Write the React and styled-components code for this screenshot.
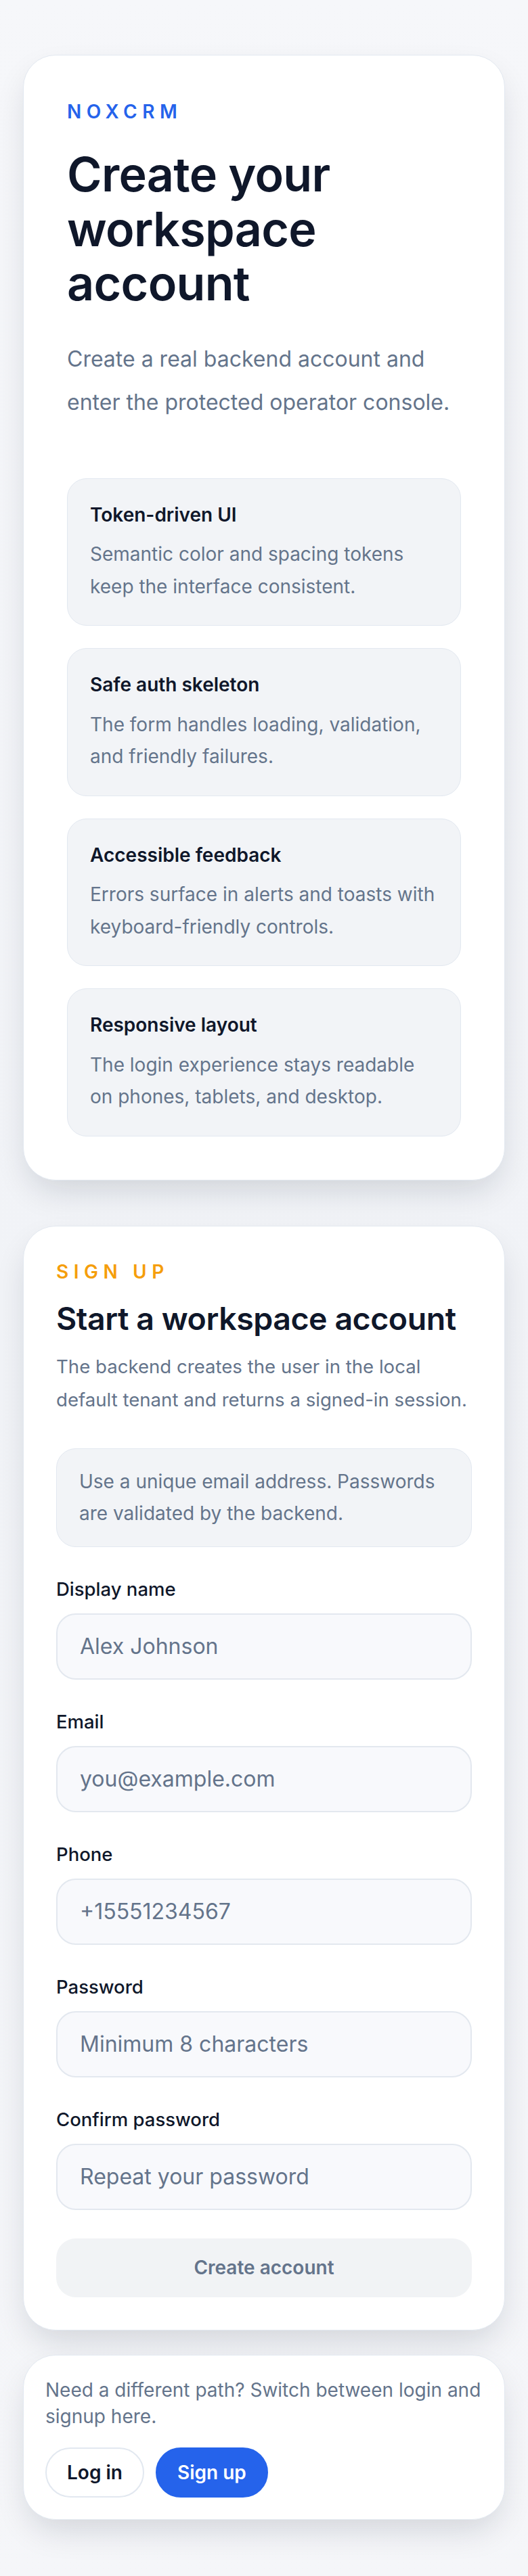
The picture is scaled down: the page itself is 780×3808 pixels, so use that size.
import React from "react";
import styled, { createGlobalStyle } from "styled-components";

const GlobalStyle = createGlobalStyle`
    * {
        box-sizing: border-box;
    }

    html, body {
        margin: 0;
        padding: 0;
        background: #f4f6f9;
    }

    body {
        font-family: Inter, "Noto Sans", "Liberation Sans", sans-serif;
        color: #0f172a;
        -webkit-font-smoothing: antialiased;
    }
`;

const Page = styled.main`
    min-height: 100vh;
    padding: 81px 34px 81px;
    display: flex;
    flex-direction: column;
    gap: 67px;
    background: linear-gradient(180deg, #f6f7fa 0%, #f1f3f7 50%, #f5f6f9 100%);
`;

const Card = styled.section`
    background: #ffffff;
    border: 1px solid #e2e8f0;
    border-radius: 48px;
    box-shadow: 0 22px 50px -10px rgba(15, 23, 42, 0.16);
    padding: ${(p) => p.$pad || "48px"};
`;

const AuthColumn = styled.div`
    display: flex;
    flex-direction: column;
    gap: 36px;
`;

const Eyebrow = styled.p`
    margin: 0;
    font-size: 28px;
    line-height: 39px;
    font-weight: 600;
    letter-spacing: 0.27em;
    text-transform: uppercase;
    color: ${(p) => p.$color};
`;

const HeroTitle = styled.h1`
    margin: 33px 0 0;
    font-size: 70px;
    line-height: 80.5px;
    font-weight: 600;
    letter-spacing: -0.01em;
    color: #0f172a;
`;

const HeroText = styled.p`
    margin: 39px 0 0;
    font-size: 32px;
    line-height: 64px;
    color: #64748b;
`;

const FeatureList = styled.div`
    margin-top: 80px;
    display: flex;
    flex-direction: column;
    gap: 33px;
`;

const Feature = styled.div`
    background: #f2f4f7;
    border: 1px solid #e2e8f0;
    border-radius: 29px;
    padding: 33px 33px;
`;

const FeatureTitle = styled.h3`
    margin: 0;
    font-size: 28px;
    line-height: 41px;
    font-weight: 600;
    color: #0f172a;
`;

const FeatureText = styled.p`
    margin: 14.5px 0 0;
    font-size: 28px;
    line-height: 47.5px;
    color: #64748b;
`;

const FormTitle = styled.h2`
    margin: 21px 0 0;
    font-size: 46.5px;
    line-height: 56px;
    font-weight: 600;
    letter-spacing: -0.01em;
    color: #0f172a;
`;

const Lead = styled.p`
    margin: 19.5px 0 0;
    font-size: 27.6px;
    line-height: 48.6px;
    color: #64748b;
`;

const Notice = styled.div`
    margin-top: 48px;
    background: #f2f4f7;
    border: 1px solid #e2e8f0;
    border-radius: 29px;
    padding: 25px 33px;
    font-size: 28px;
    line-height: 47px;
    color: #64748b;
`;

const Form = styled.form`
    margin-top: 43.5px;
    display: flex;
    flex-direction: column;
    gap: 44px;
`;

const Field = styled.label`
    display: flex;
    flex-direction: column;
    gap: 18px;
`;

const FieldLabel = styled.span`
    font-size: 27.5px;
    line-height: 36px;
    font-weight: 500;
    color: #0f172a;
`;

const Input = styled.input`
    height: 98px;
    width: 100%;
    border: 2px solid #e3e8ef;
    border-radius: 29px;
    background: #f8f9fc;
    padding: 0 33px;
    font-family: inherit;
    font-size: 32px;
    color: #0f172a;
    outline: none;

    &::placeholder {
        color: #64748b;
        opacity: 1;
    }
`;

const SubmitButton = styled.button`
    margin-top: -2px;
    height: 87.5px;
    border: none;
    border-radius: 29px;
    background: #f1f3f5;
    color: #64748b;
    font-family: inherit;
    font-size: 28px;
    font-weight: 600;
`;

const SwitchText = styled.p`
    margin: 0;
    font-size: 28px;
    line-height: 39.3px;
    color: #64748b;
`;

const ButtonRow = styled.div`
    margin-top: 25px;
    display: flex;
    gap: 17px;
`;

const PillButton = styled.button`
    height: 74.5px;
    padding: 0 30px;
    border-radius: 999px;
    border: 2px solid ${(p) => (p.$primary ? "#2563eb" : "#e2e8f0")};
    background: ${(p) => (p.$primary ? "#2563eb" : "#ffffff")};
    color: ${(p) => (p.$primary ? "#ffffff" : "#0f172a")};
    font-family: inherit;
    font-size: 28px;
    font-weight: 600;
`;

const features = [
    {
        title: "Token-driven UI",
        text: "Semantic color and spacing tokens keep the interface consistent.",
    },
    {
        title: "Safe auth skeleton",
        text: "The form handles loading, validation, and friendly failures.",
    },
    {
        title: "Accessible feedback",
        text: "Errors surface in alerts and toasts with keyboard-friendly controls.",
    },
    {
        title: "Responsive layout",
        text: "The login experience stays readable on phones, tablets, and desktop.",
    },
];

const fields = [
    { label: "Display name", type: "text", placeholder: "Alex Johnson" },
    { label: "Email", type: "email", placeholder: "you@example.com" },
    { label: "Phone", type: "tel", placeholder: "+15551234567" },
    { label: "Password", type: "password", placeholder: "Minimum 8 characters" },
    { label: "Confirm password", type: "password", placeholder: "Repeat your password" },
];

export default function App() {
    return (
        <>
            <GlobalStyle />
            <Page>
                <Card $pad="64px">
                    <Eyebrow $color="#2563eb">NoxCRM</Eyebrow>
                    <HeroTitle>Create your workspace account</HeroTitle>
                    <HeroText>
                        Create a real backend account and enter the protected operator console.
                    </HeroText>
                    <FeatureList>
                        {features.map((f) => (
                            <Feature key={f.title}>
                                <FeatureTitle>{f.title}</FeatureTitle>
                                <FeatureText>{f.text}</FeatureText>
                            </Feature>
                        ))}
                    </FeatureList>
                </Card>

                <AuthColumn>
                    <Card>
                        <Eyebrow $color="#f59e0b">Sign up</Eyebrow>
                        <FormTitle>Start a workspace account</FormTitle>
                        <Lead>
                            The backend creates the user in the local default tenant and returns a
                            signed-in session.
                        </Lead>
                        <Notice>
                            Use a unique email address. Passwords are validated by the backend.
                        </Notice>
                        <Form onSubmit={(e) => e.preventDefault()}>
                            {fields.map((f) => (
                                <Field key={f.label}>
                                    <FieldLabel>{f.label}</FieldLabel>
                                    <Input type={f.type} placeholder={f.placeholder} />
                                </Field>
                            ))}
                            <SubmitButton type="submit">Create account</SubmitButton>
                        </Form>
                    </Card>

                    <Card $pad="32px">
                        <SwitchText>
                            Need a different path? Switch between login and signup here.
                        </SwitchText>
                        <ButtonRow>
                            <PillButton type="button">Log in</PillButton>
                            <PillButton type="button" $primary>
                                Sign up
                            </PillButton>
                        </ButtonRow>
                    </Card>
                </AuthColumn>
            </Page>
        </>
    );
}
